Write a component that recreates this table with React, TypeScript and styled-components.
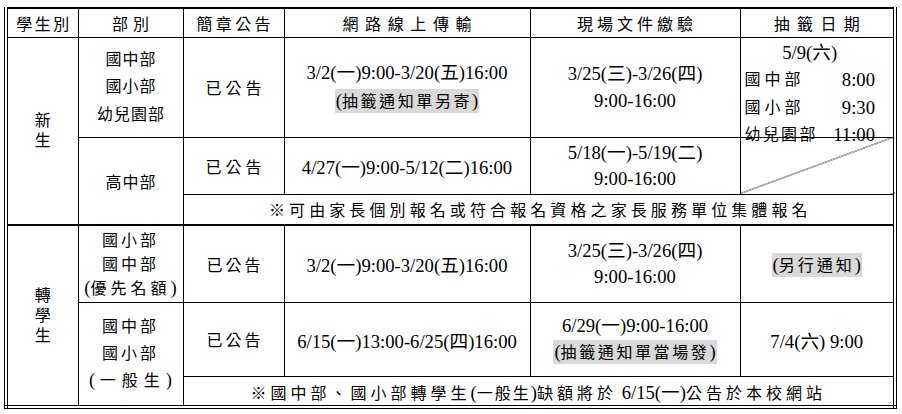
import styled, { createGlobalStyle } from 'styled-components';

const GlobalStyle = createGlobalStyle`
  html, body {
    margin: 0;
    padding: 0;
    background: #ffffff;
  }
  body {
    font-family: "Liberation Serif", "Noto Sans CJK TC", serif;
    color: #000000;
  }
`;

const Sheet = styled.div`
  width: 902px;
  height: 414px;
  overflow: hidden;
  padding: 7px 0 0 4px;
  box-sizing: border-box;
`;

const Table = styled.table`
  width: 893px;
  table-layout: fixed;
  border-collapse: collapse;
  border: 4px double #000;
  border-top: 2px solid #000;
  font-size: 18.67px;
`;

const Col = styled.col<{ $w: number }>`
  width: ${p => p.$w}px;
`;

const Row = styled.tr<{ $h: number }>`
  height: ${p => p.$h}px;
`;

// one table cell; $han = CJK-only text set smaller with tracking like the Word file
const Cell = styled.td<{ $thick?: boolean; $han?: boolean; $ls?: number; $lh?: number }>`
  border: 1px solid #000;
  border-bottom-width: ${p => (p.$thick ? 2 : 1)}px;
  padding: 0 2px 0 ${p => 2 + (p.$ls ?? 0)}px;
  text-align: center;
  vertical-align: middle;
  font-weight: normal;
  font-size: ${p => (p.$han ? '16px' : 'inherit')};
  letter-spacing: ${p => p.$ls ?? 0}px;
  line-height: ${p => (p.$lh ? `${p.$lh}px` : 'normal')};
  white-space: nowrap;
`;

// empty cell crossed by a diagonal stroke
const SlashCell = styled.td`
  border: 1px solid #000;
  padding: 0;
  background: linear-gradient(
    to bottom right,
    transparent calc(50% - 0.6px),
    #000 50%,
    transparent calc(50% + 0.6px)
  );
`;

const Han = styled.span<{ $ls?: number }>`
  font-size: 16px;
  letter-spacing: ${p => p.$ls ?? 2.5}px;
`;

const Mark = styled.span`
  background: #d9d9d9;
  padding: 1px 1px 2px;
`;

const DrawCell = styled.td`
  border: 1px solid #000;
  padding: 0;
  vertical-align: top;
`;

const DrawList = styled.div`
  height: 99px;
  padding: 1px 18px 0 4px;
  box-sizing: border-box;
  line-height: 27.5px;
  white-space: nowrap;
`;

const DrawTitle = styled.div`
  text-align: center;
`;

const DrawRow = styled.div`
  display: flex;
  justify-content: space-between;
`;

export default function App() {
  return (
    <>
      <GlobalStyle />
      <Sheet>
        <Table>
          <colgroup>
            <Col $w={72} />
            <Col $w={105} />
            <Col $w={101} />
            <Col $w={246} />
            <Col $w={210} />
            <Col $w={155} />
          </colgroup>
          <tbody>
            <Row $h={29}>
              <Cell as="th" $han $ls={2.5}>學生別</Cell>
              <Cell as="th" $han $ls={5}>部別</Cell>
              <Cell as="th" $han $ls={3.3}>簡章公告</Cell>
              <Cell as="th" $han $ls={6.6}>網路線上傳輸</Cell>
              <Cell as="th" $han $ls={4}>現場文件繳驗</Cell>
              <Cell as="th" $han $ls={7.3}>抽籤日期</Cell>
            </Row>

            <Row $h={100}>
              <Cell rowSpan={3} $thick $han $lh={20}>新<br />生</Cell>
              <Cell $han $ls={1} $lh={27.5}>國中部<br />國小部<br />幼兒園部</Cell>
              <Cell $han $ls={4}>已公告</Cell>
              <Cell $lh={28}>
                3/2(一)9:00-3/20(五)16:00<br />
                <Mark>(<Han $ls={2.6}>抽籤通知單另寄</Han>)</Mark>
              </Cell>
              <Cell $lh={27}>3/25(三)-3/26(四)<br />9:00-16:00</Cell>
              <DrawCell>
                <DrawList>
                  <DrawTitle>5/9(六)</DrawTitle>
                  <DrawRow><Han $ls={4}>國中部</Han><span>8:00</span></DrawRow>
                  <DrawRow><Han $ls={4}>國小部</Han><span>9:30</span></DrawRow>
                  <DrawRow><Han $ls={2.3}>幼兒園部</Han><span>11:00</span></DrawRow>
                </DrawList>
              </DrawCell>
            </Row>

            <Row $h={57}>
              <Cell rowSpan={2} $thick $han $ls={1}>高中部</Cell>
              <Cell $han $ls={4}>已公告</Cell>
              <Cell>4/27(一)9:00-5/12(二)16:00</Cell>
              <Cell $lh={26}>5/18(一)-5/19(二)<br />9:00-16:00</Cell>
              <SlashCell />
            </Row>

            <Row $h={31}>
              <Cell colSpan={4} $thick $han $ls={4.1}>※可由家長個別報名或符合報名資格之家長服務單位集體報名</Cell>
            </Row>

            <Row $h={77}>
              <Cell rowSpan={3} $han $lh={20}>轉<br />學<br />生</Cell>
              <Cell $lh={23}>
                <Han $ls={3}>國小部</Han><br />
                <Han $ls={3}>國中部</Han><br />
                (<Han $ls={4}>優先名額</Han>)
              </Cell>
              <Cell $han $ls={3}>已公告</Cell>
              <Cell>3/2(一)9:00-3/20(五)16:00</Cell>
              <Cell $lh={26}>3/25(三)-3/26(四)<br />9:00-16:00</Cell>
              <Cell><Mark>(<Han $ls={3}>另行通知</Han>)</Mark></Cell>
            </Row>

            <Row $h={74}>
              <Cell rowSpan={2} $lh={26}>
                <Han $ls={3}>國中部</Han><br />
                <Han $ls={3}>國小部</Han><br />
                ( <Han $ls={6}>一般生</Han>)
              </Cell>
              <Cell $han $ls={3}>已公告</Cell>
              <Cell>6/15(一)13:00-6/25(四)16:00</Cell>
              <Cell $lh={26}>
                6/29(一)9:00-16:00<br />
                <Mark>(<Han $ls={2.6}>抽籤通知單當場發</Han>)</Mark>
              </Cell>
              <Cell>7/4(六) 9:00</Cell>
            </Row>

            <Row $h={31}>
              <Cell colSpan={4}>
                <Han $ls={4}>※國中部、國小部轉學生</Han>(<Han $ls={2}>一般生</Han>)<Han $ls={4}>缺額將於</Han> 6/15(一)<Han $ls={4}>公告於本校網站</Han>
              </Cell>
            </Row>
          </tbody>
        </Table>
      </Sheet>
    </>
  );
}
